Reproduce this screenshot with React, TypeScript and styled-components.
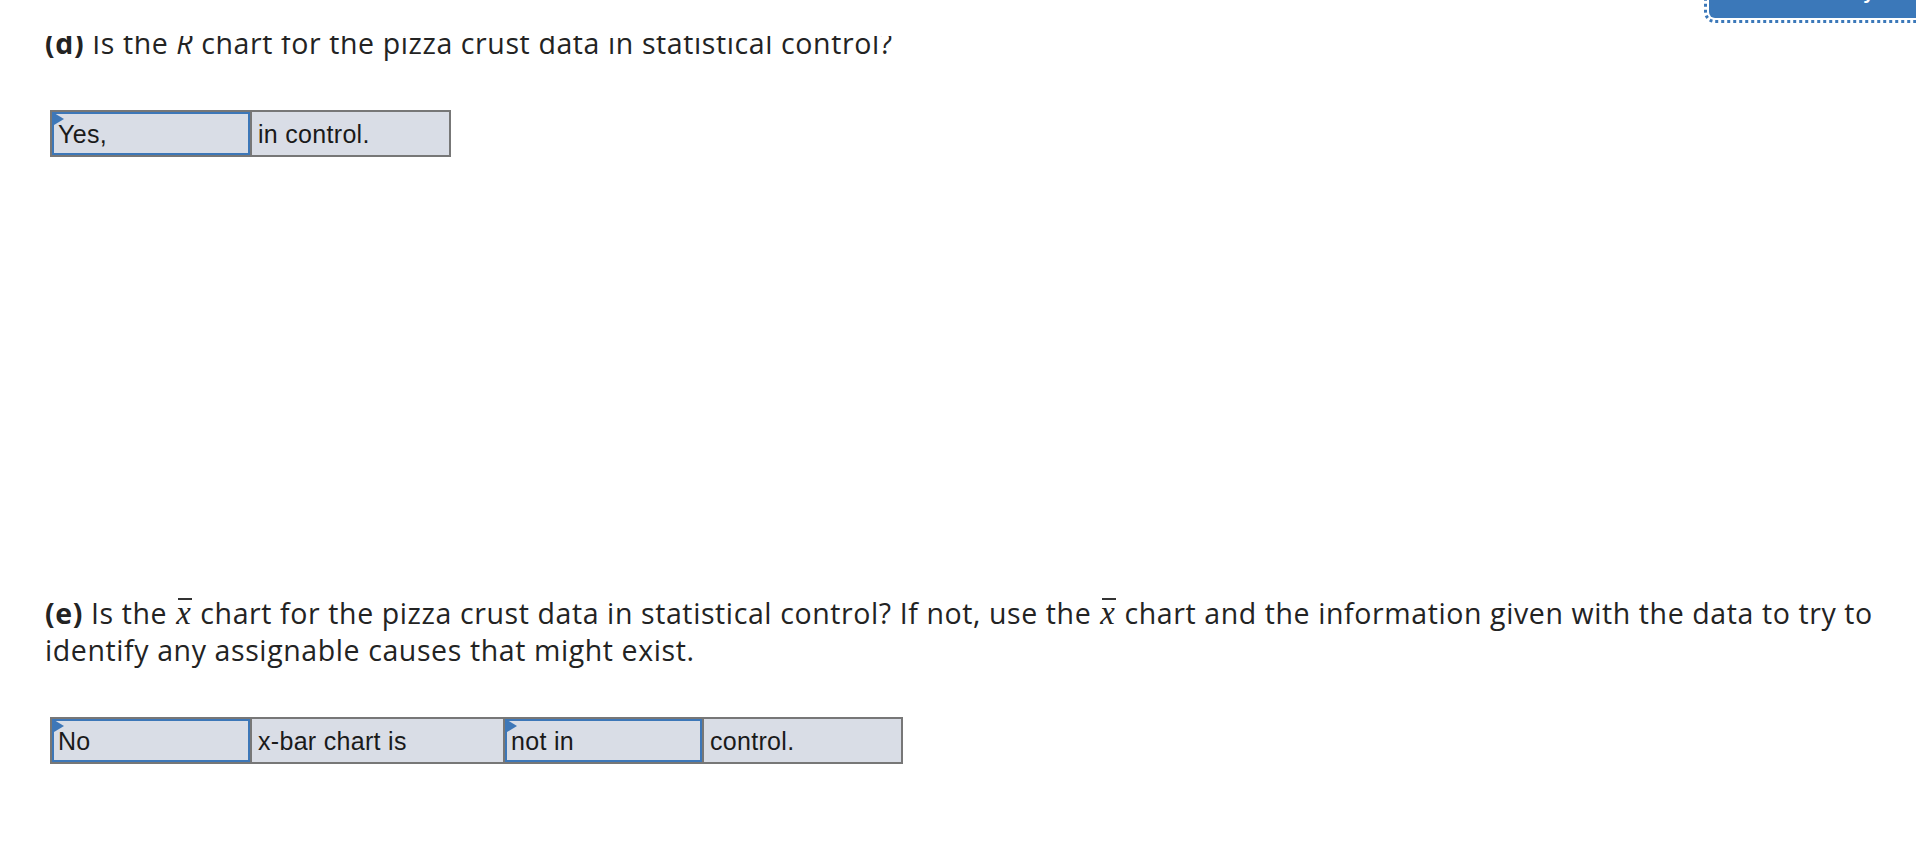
import styled, { createGlobalStyle } from "styled-components";

const GlobalStyle = createGlobalStyle`
  body {
    margin: 0;
    background: #fff;
    color: #232323;
    font-family: "Open Sans", Lato, sans-serif;
  }
`;

const TopBar = styled.header`
  position: fixed;
  top: 0;
  left: 0;
  right: 0;
  height: 36px;
  background: #fff;
  overflow: hidden;
  display: flex;
  justify-content: flex-end;
  z-index: 2;
`;

const CheckButton = styled.button`
  width: 230px;
  height: 58px;
  margin-top: -40px;
  margin-right: -23px;
  padding: 6px 0 0 71px;
  border: none;
  border-radius: 6px;
  background: #3b78b9;
  color: #fff;
  font-family: "Liberation Sans", Arial, sans-serif;
  font-weight: bold;
  font-size: 20px;
  line-height: 24px;
  text-align: left;
  white-space: nowrap;
  outline: 3px dotted #3b78b9;
  outline-offset: 2px;
`;

const Page = styled.main`
  display: flex;
  flex-direction: column;
  align-items: flex-start;
  padding: 25px 0 0 45px;
`;

const Question = styled.p<{ $gap?: number }>`
  margin: ${(p) => p.$gap ?? 0}px 0 0;
  width: 1845px;
  font-size: 28.5px;
  letter-spacing: 0.6px;
  line-height: 37px;
`;

const Part = styled.b`
  font-weight: 700;
`;

const Xbar = styled.span`
  position: relative;
  margin: 0 1px;
  font-family: "Liberation Serif", "Times New Roman", serif;
  font-style: italic;
  font-size: 1.15em;

  &::before {
    content: "";
    position: absolute;
    left: 2px;
    right: -1px;
    top: 3px;
    border-top: 2px solid #333;
  }
`;

const AnswerRow = styled.div<{ $gap: number }>`
  display: flex;
  margin: ${(p) => p.$gap}px 0 0 5px;
  border: 2px solid #777;
  background: #777;
  gap: 2px;
`;

const Cell = styled.div<{ $w: number; $blue?: boolean }>`
  position: relative;
  width: ${(p) => p.$w}px;
  height: 43px;
  box-sizing: border-box;
  padding: 2px 0 0 6px;
  display: flex;
  align-items: center;
  background: #d9dde6;
  box-shadow: ${(p) => (p.$blue ? "inset 0 0 0 2px #3d77b8" : "none")};
  font-family: "Liberation Sans", Arial, sans-serif;
  font-size: 25px;
  letter-spacing: 0.3px;
  color: #1a1a1a;

  &::before {
    content: "";
    display: ${(p) => (p.$blue ? "block" : "none")};
    position: absolute;
    left: 2px;
    top: 1px;
    border-left: 10px solid #3d77b8;
    border-top: 6px solid transparent;
    border-bottom: 6px solid transparent;
  }
`;

export default function App() {
  return (
    <>
      <GlobalStyle />
      <TopBar>
        <CheckButton>Check my work</CheckButton>
      </TopBar>
      <Page>
        <Question>
          <Part>(d)</Part> Is the <em>R</em> chart for the pizza crust data in
          statistical control?
        </Question>
        <AnswerRow $gap={48}>
          <Cell $w={198} $blue>
            Yes,
          </Cell>
          <Cell $w={197}>in control.</Cell>
        </AnswerRow>
        <Question $gap={438}>
          <Part>(e)</Part> Is the <Xbar>x</Xbar> chart for the pizza crust data
          in statistical control? If not, use the <Xbar>x</Xbar> chart and the
          information given with the data to try to identify any assignable
          causes that might exist.
        </Question>
        <AnswerRow $gap={48}>
          <Cell $w={198} $blue>
            No
          </Cell>
          <Cell $w={251}>x-bar chart is</Cell>
          <Cell $w={197} $blue>
            not in
          </Cell>
          <Cell $w={197}>control.</Cell>
        </AnswerRow>
      </Page>
    </>
  );
}
